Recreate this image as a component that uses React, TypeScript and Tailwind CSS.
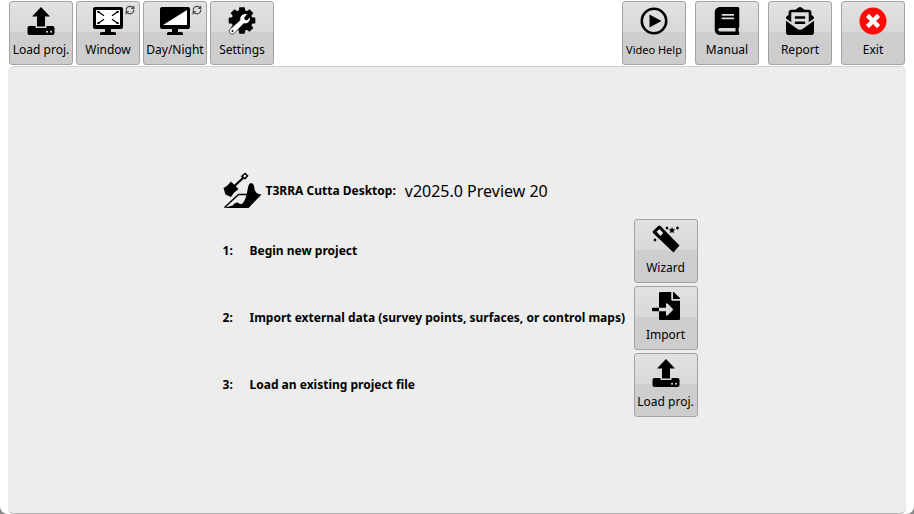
import React from 'react'
import { FaBook, FaEnvelopeOpenText, FaFileImport, FaTimesCircle } from 'react-icons/fa'
import { RefreshCw } from 'lucide-react'

type ToolButtonProps = {
  label: string
  icon: React.ReactNode
  small?: boolean
  toggles?: boolean
}

function ToolButton({ label, icon, small, toggles }: ToolButtonProps) {
  return (
    <button
      type="button"
      className="relative flex h-16 w-16 shrink-0 flex-col items-center gap-[5px] rounded-[3px] border border-[#a3a3a3] bg-[linear-gradient(#e2e2e2,#d8d8d8_48%,#cecece_48%,#cdcdcd)] pt-[5px] text-black hover:brightness-105"
    >
      <span className="flex h-7 items-center justify-center">{icon}</span>
      <span className={small ? 'text-[11px] leading-5 whitespace-nowrap' : 'text-[12px] leading-5 whitespace-nowrap'}>
        {label}
      </span>
      {toggles && <RefreshCw className="absolute top-[3px] right-1 h-2.5 w-2.5 text-[#4a4a4a]" strokeWidth={3} />}
    </button>
  )
}

function UploadIcon() {
  return (
    <svg viewBox="0 0 28 28" className="h-7 w-7">
      <path d="M14 0 23 9.5H18V19.5H10V9.5H5Z" />
      <path d="M2.5 19H8.5V21H19.5V19H25.5Q27.5 19 27.5 21V26Q27.5 28 25.5 28H2.5Q.5 28 .5 26V21Q.5 19 2.5 19Z" />
      <circle cx="20" cy="24.7" r="1" fill="#ddd" />
      <circle cx="24" cy="24.7" r="1" fill="#ddd" />
    </svg>
  )
}

function Monitor({ children }: { children: React.ReactNode }) {
  return (
    <svg viewBox="0 0 32 28" className="h-7 w-8">
      <path d="M3 0H29Q31 0 31 2V20Q31 22 29 22H19V25H22.5Q24 25 24 26.5V28H8V26.5Q8 25 9.5 25H13V22H3Q1 22 1 20V2Q1 0 3 0Z" />
      {children}
    </svg>
  )
}

function WindowIcon() {
  return (
    <Monitor>
      <path d="M4 3H28V18H4Z" fill="#fff" />
      <path d="M6 4.5 12 8.7M26 4.5 20 8.7M6 16.5 12 12.3M26 16.5 20 12.3" stroke="#000" strokeWidth="1.3" />
      <path d="M5 4H8L6 6.5ZM27 4H24L26 6.5ZM5 17H8L6 14.5ZM27 17H24L26 14.5Z" />
    </Monitor>
  )
}

function DayNightIcon() {
  return (
    <Monitor>
      <path d="M28 3V18H4Z" fill="#fff" />
    </Monitor>
  )
}

const teeth = [0, 45, 90, 135, 180, 225, 270, 315]

function SettingsIcon() {
  return (
    <svg viewBox="0 0 28 28" className="h-7 w-7">
      <circle cx="14" cy="13.5" r="10.5" />
      {teeth.map((angle) => (
        <path key={angle} d="M10.5 5 11.3 .2H16.7L17.5 5Z" transform={`rotate(${angle} 14 13.5)`} />
      ))}
      <path
        d="M19.5 7.2 16.5 10.5 17 12.5 19 13 22 10C23.2 13.5 20 17.5 15.8 16.6L6.2 26.4C3.8 28.5 -.2 25.5 1.8 22.3L12 13.3C11 9 15.3 5.2 19.5 7.2Z"
        fill="#fff"
        stroke="#000"
        strokeWidth=".7"
      />
      <circle cx="4.5" cy="24" r="1" />
    </svg>
  )
}

function PlayIcon() {
  return (
    <svg viewBox="0 0 28 28" className="h-7 w-7">
      <circle cx="14" cy="14" r="12.2" fill="none" stroke="#000" strokeWidth="2.6" />
      <path d="M9.5 7.5 21.5 14 9.5 20.5Z" />
    </svg>
  )
}

function WandIcon() {
  return (
    <svg viewBox="0 0 28 28" className="h-7 w-7">
      <path d="M1 6 6.5 .7Q7.5 0 8.5 1L27.5 20.5 21.5 27.5 1 8Q.2 7 1 6Z" />
      <path d="M4.5 6.7 7.5 4 11.2 8 8.5 11Z" fill="#e8e8e8" />
      <path d="M20 2 21 4 23.2 4.3 21.6 5.9 22 8.2 20 7.1 18 8.2 18.4 5.9 16.8 4.3 19 4Z" />
      <path d="M15 1.2 16.7 3 15 4.8 13.3 3ZM25.5 1.2 27.2 3 25.5 4.8 23.8 3ZM3 13.2 4.7 15 3 16.8 1.3 15Z" />
    </svg>
  )
}

function TerraLogo() {
  return (
    <svg viewBox="0 0 40 38" className="h-[38px] w-10 shrink-0">
      <path d="M11 14.5 20.5 5.5" stroke="#000" strokeWidth="2.2" />
      <path d="M18.8 4.2 22 1.5 24.5 3.8 22 6.8Z" fill="none" stroke="#000" strokeWidth="1.5" />
      <path d="M.5 16Q4 14.5 8 9.5L15.5 17Q11 20 8 25L2.5 22.5Z" />
      <path d="M1.5 35.5 15.5 22.5H25" fill="none" stroke="#000" strokeWidth="1.4" />
      <path d="M38.5 22.5 25.5 36H.5L9.5 33.5Q12 30 15 30.5 17 33 19.5 31.5 23 28 24.5 18 25.5 11 28.2 11 31 11 31.5 17 32.5 22 38.5 22.5Z" />
    </svg>
  )
}

const steps = [
  { text: 'Begin new project', label: 'Wizard', icon: <WandIcon /> },
  {
    text: 'Import external data (survey points, surfaces, or control maps)',
    label: 'Import',
    icon: <FaFileImport className="h-7 w-7" />,
  },
  { text: 'Load an existing project file', label: 'Load proj.', icon: <UploadIcon /> },
]

export default function App() {
  return (
    <div className="min-h-screen bg-[#8c8c8c] font-['Noto_Sans','Open_Sans',sans-serif] text-black">
      <div className="flex min-h-screen flex-col rounded-b-lg bg-white">
        <header className="flex justify-between px-[9px] pt-px">
          <nav className="flex gap-[3px]">
            <ToolButton label="Load proj." icon={<UploadIcon />} />
            <ToolButton label="Window" icon={<WindowIcon />} toggles />
            <ToolButton label="Day/Night" icon={<DayNightIcon />} toggles />
            <ToolButton label="Settings" icon={<SettingsIcon />} />
          </nav>
          <nav className="flex gap-[9px]">
            <ToolButton label="Video Help" icon={<PlayIcon />} small />
            <ToolButton label="Manual" icon={<FaBook className="h-7 w-7" />} />
            <ToolButton label="Report" icon={<FaEnvelopeOpenText className="h-7 w-7" />} />
            <ToolButton
              label="Exit"
              icon={
                <FaTimesCircle className="h-7 w-7 bg-[radial-gradient(circle,white_10px,transparent_10px)] text-[#ff0a0a]" />
              }
            />
          </nav>
        </header>

        <main className="mx-2 mt-px flex flex-1 flex-col items-center rounded-md border-y border-t-[#d0d0d0] border-b-[#b8b8b8] bg-[#ededed] pt-[105px] pl-1.5">
          <div className="w-[475px]">
            <div className="mb-[9px] flex items-center gap-[3px]">
              <TerraLogo />
              <h1 className="mr-1.5 text-[12px] font-bold">T3RRA Cutta Desktop:</h1>
              <span className="text-[16px]">v2025.0 Preview 20</span>
            </div>
            <ol className="flex flex-col gap-[3px]">
              {steps.map((step, i) => (
                <li key={step.label} className="flex items-center text-[12px] font-bold">
                  <span className="w-[27px] shrink-0">{i + 1}:</span>
                  <span className="flex-1 whitespace-nowrap">{step.text}</span>
                  <div className="font-normal">
                    <ToolButton label={step.label} icon={step.icon} />
                  </div>
                </li>
              ))}
            </ol>
          </div>
        </main>
      </div>
    </div>
  )
}
